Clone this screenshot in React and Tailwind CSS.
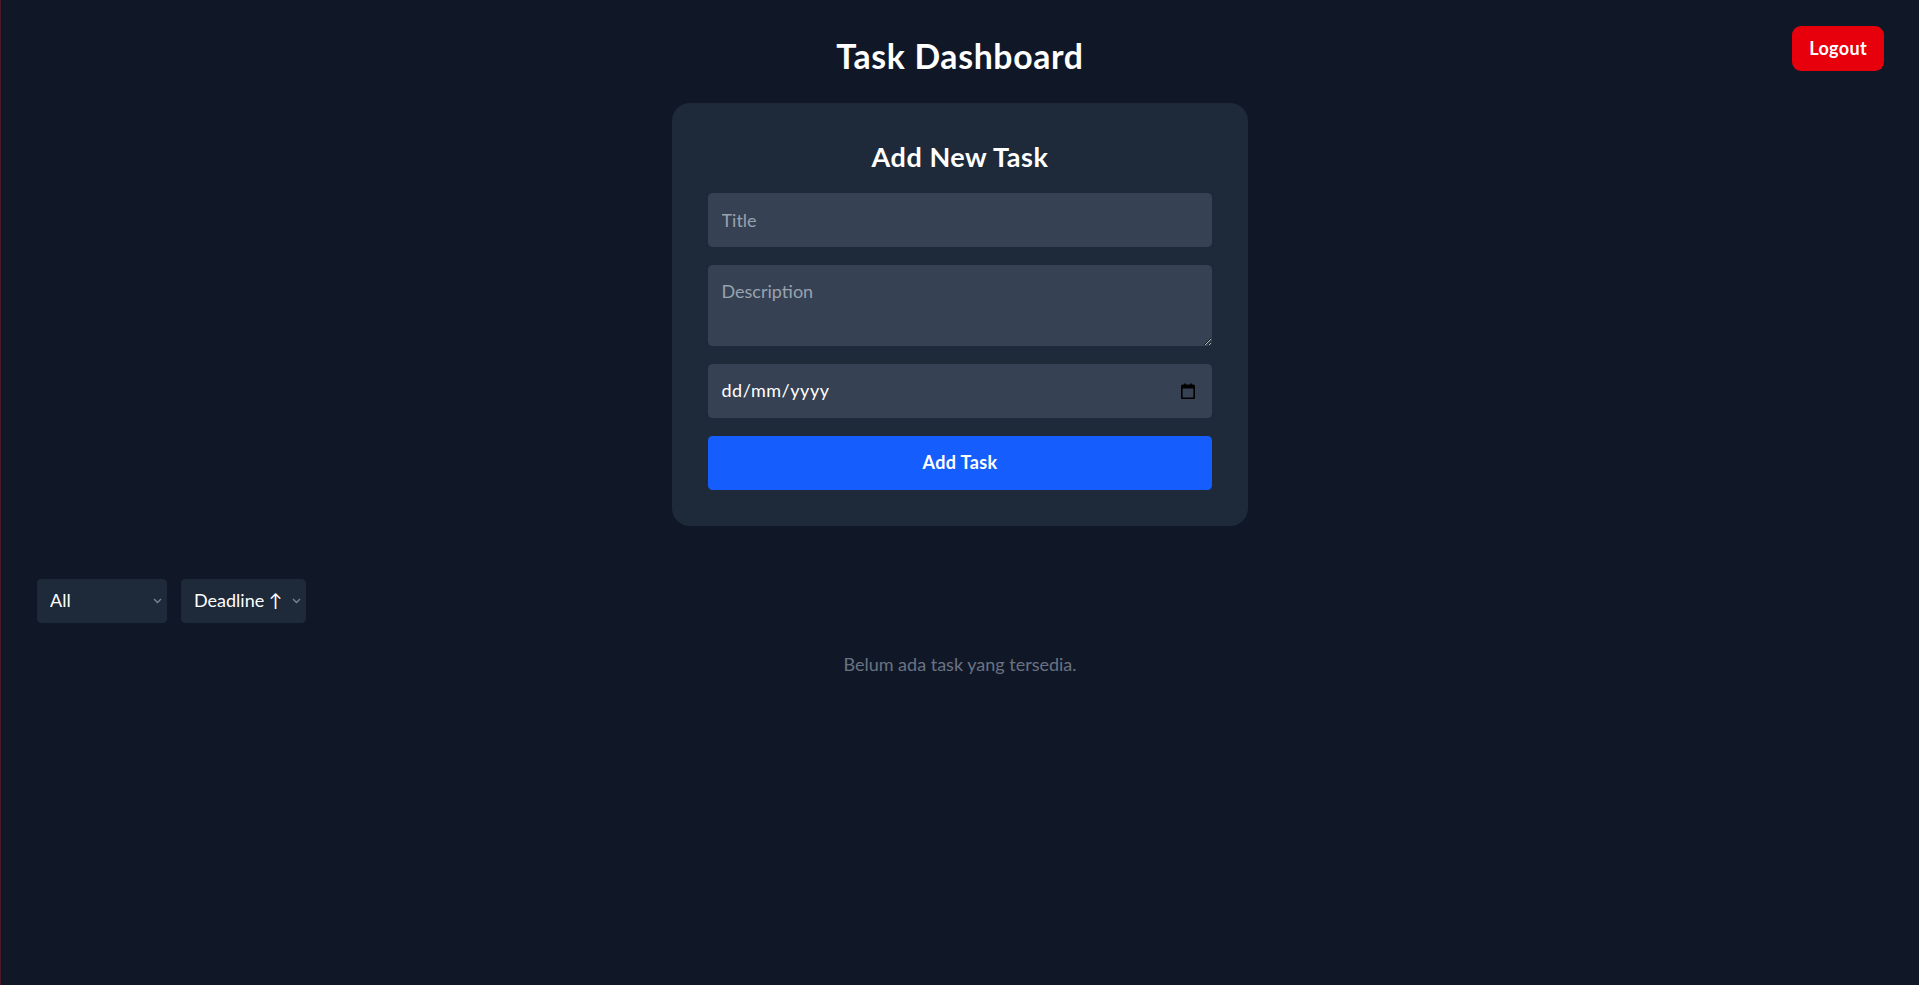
import React, { useState } from 'react';

const CalendarIcon = () => (
  <svg width="14" height="16" viewBox="0 0 14 16" fill="none">
    <rect x="3" y="0.5" width="1.6" height="3" fill="#000" />
    <rect x="9.4" y="0.5" width="1.6" height="3" fill="#000" />
    <rect x="0.8" y="2.3" width="12.4" height="12.9" rx="0.8" stroke="#000" strokeWidth="1.6" />
    <rect x="0.8" y="2.3" width="12.4" height="3.2" fill="#000" />
  </svg>
);

const Chevron = () => (
  <svg width="9" height="6" viewBox="0 0 9 6" fill="none">
    <path d="M1 1l3.5 3.5L8 1" stroke="#7b8391" strokeWidth="1.4" />
  </svg>
);

const App = () => {
  const [title, setTitle] = useState('');
  const [description, setDescription] = useState('');
  const [filter, setFilter] = useState('all');
  const [sort, setSort] = useState('asc');

  return (
    <div className="min-h-screen bg-[#101828] text-white p-[36px] relative border-l border-[#4a1826] font-['Segoe_UI',Lato,sans-serif]">
      <button className="absolute top-[26px] right-[35px] bg-[#e7000b] text-white text-[18px] leading-[27px] font-bold tracking-[0.02em] px-[17px] py-[9px] rounded-[9px]">
        Logout
      </button>

      <h1 className="text-[33.75px] leading-[40.5px] font-bold tracking-[0.02em] text-center mb-[26px]">Task Dashboard</h1>

      <div className="max-w-[576px] mx-auto bg-[#1e2939] rounded-[18px] p-[36px]">
        <h2 className="text-[27px] leading-[36px] font-bold tracking-[0.02em] text-center mb-[18px]">Add New Task</h2>
        <div className="flex flex-col gap-[18px]">
          <input
            value={title}
            onChange={(e) => setTitle(e.target.value)}
            placeholder="Title"
            className="w-full h-[54px] px-[13.5px] bg-[#364153] rounded-[4.5px] text-[18px] text-white placeholder:text-[#99a1af] outline-none"
          />
          <textarea
            value={description}
            onChange={(e) => setDescription(e.target.value)}
            placeholder="Description"
            rows={2}
            className="w-full h-[81px] p-[13.5px] leading-[27px] bg-[#364153] rounded-[4.5px] text-[18px] text-white placeholder:text-[#99a1af] outline-none block"
          />
          <div className="w-full h-[54px] px-[13.5px] bg-[#364153] rounded-[4.5px] flex items-center justify-between">
            <span className="text-[18px] text-white tracking-[0.03em]">dd/mm/yyyy</span>
            <span className="mr-[4px] flex items-center"><CalendarIcon /></span>
          </div>
          <button className="w-full h-[54px] bg-[#155dfc] rounded-[4.5px] text-[18px] font-bold tracking-[0.02em] text-white">
            Add Task
          </button>
        </div>
      </div>

      <div className="mt-[53px] flex gap-[14px]">
        <div className="relative w-[130px] h-[44px]">
          <select
            value={filter}
            onChange={(e) => setFilter(e.target.value)}
            className="appearance-none w-full h-full bg-[#1e2939] rounded-[4.5px] pl-[13px] text-[18px] text-white outline-none"
          >
            <option value="all">All</option>
            <option value="done">Completed</option>
            <option value="pending">Pending</option>
          </select>
          <span className="absolute right-[5px] top-[19px] pointer-events-none"><Chevron /></span>
        </div>
        <div className="relative w-[125px] h-[44px]">
          <select
            value={sort}
            onChange={(e) => setSort(e.target.value)}
            className="appearance-none w-full h-full bg-[#1e2939] rounded-[4.5px] pl-[13px] text-[18px] text-white outline-none"
          >
            <option value="asc">Deadline ↑</option>
            <option value="desc">Deadline ↓</option>
          </select>
          <span className="absolute right-[5px] top-[19px] pointer-events-none"><Chevron /></span>
        </div>
      </div>

      <p className="mt-[28px] text-center text-[18px] leading-[27px] text-[#6a7282]">Belum ada task yang tersedia.</p>
    </div>
  );
};

export default App;
